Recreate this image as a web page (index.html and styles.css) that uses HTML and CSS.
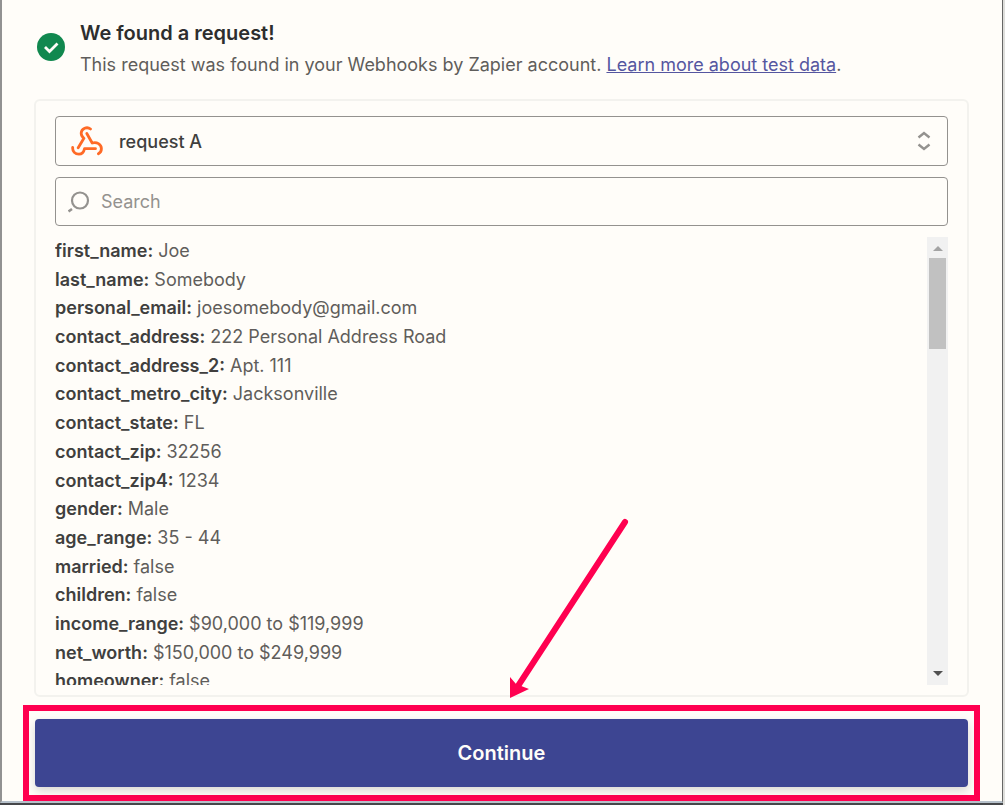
FILE: index.html
```
<!DOCTYPE html>
<html lang="en">
<head>
    <meta charset="UTF-8">
    <meta name="viewport" content="width=device-width, initial-scale=1.0">
    <title>Test trigger</title>
    <link rel="stylesheet" href="styles.css">
</head>
<body>
    <main class="panel">
        <header class="status">
            <svg class="status-icon" viewBox="0 0 28 28" aria-hidden="true">
                <circle cx="14" cy="14" r="14" fill="#11884f"/>
                <path d="M8 14l4.500 4.500L20.500 10.500" fill="none" stroke="#fffdf9" stroke-width="2.800"/>
            </svg>
            <div>
                <h1>We found a request!</h1>
                <p>This request was found in your Webhooks by Zapier account. <a href="#">Learn more about test data</a>.</p>
            </div>
        </header>

        <section class="card">
            <div class="field">
                <svg class="hook-icon" viewBox="0 0 32 30" aria-hidden="true">
                    <g fill="none" stroke="#ff6a26" stroke-width="2.800" stroke-linecap="round" stroke-linejoin="round">
                        <path d="M19.500 3C16 .2 10.500 2.500 10.200 7c-.1 2.200 1 4 2.700 5.300L7.200 21.800"/>
                        <path d="M15.800 7.500L21.200 17c4.500-1.500 9.200 1.200 9.200 5.700 0 2.200-1.200 4-3 5"/>
                        <path d="M1.700 21.500c-.4 4 2.500 6.700 6.200 6.700 2.700 0 4.800-1.700 5.600-5.500h11"/>
                    </g>
                </svg>
                <select class="request" aria-label="Request">
                    <option>request A</option>
                </select>
                <svg class="sort-icon" viewBox="0 0 14 20" aria-hidden="true">
                    <path d="M1.500 6.500L7 2l5.500 4.500M1.500 13.500L7 18l5.500-4.500" fill="none" stroke="#94928f" stroke-width="2.400"/>
                </svg>
            </div>

            <div class="field search">
                <svg class="search-icon" viewBox="0 0 22 22" aria-hidden="true">
                    <circle cx="12" cy="9.500" r="8" fill="none" stroke="#94928f" stroke-width="2.200"/>
                    <path d="M.5 20.500l3.500-2.500" stroke="#94928f" stroke-width="2.500"/>
                </svg>
                <input type="search" placeholder="Search" aria-label="Search">
            </div>

            <div class="results">
                <ul>
                    <li><b>first_name:</b> Joe</li>
                    <li><b>last_name:</b> Somebody</li>
                    <li><b>personal_email:</b> joesomebody@gmail.com</li>
                    <li><b>contact_address:</b> 222 Personal Address Road</li>
                    <li><b>contact_address_2:</b> Apt. 111</li>
                    <li><b>contact_metro_city:</b> Jacksonville</li>
                    <li><b>contact_state:</b> FL</li>
                    <li><b>contact_zip:</b> 32256</li>
                    <li><b>contact_zip4:</b> 1234</li>
                    <li><b>gender:</b> Male</li>
                    <li><b>age_range:</b> 35 - 44</li>
                    <li><b>married:</b> false</li>
                    <li><b>children:</b> false</li>
                    <li><b>income_range:</b> $90,000 to $119,999</li>
                    <li><b>net_worth:</b> $150,000 to $249,999</li>
                    <li><b>homeowner:</b> false</li>
                </ul>
                <div class="scrollbar" aria-hidden="true">
                    <svg viewBox="0 0 21 21"><path d="M6 14h10l-5-5z" fill="#a3a3a3"/></svg>
                    <div class="thumb"></div>
                    <svg viewBox="0 0 21 21"><path d="M6 7h10l-5 5z" fill="#505050"/></svg>
                </div>
            </div>
        </section>

        <div class="highlight">
            <svg class="arrow" viewBox="0 0 122 184" aria-hidden="true">
                <path d="M117 5L10 169" stroke="#ff0050" stroke-width="6" stroke-linecap="round"/>
                <path d="M2 181V160l6 7 13 5z" fill="#ff0050"/>
            </svg>
            <button type="button">Continue</button>
        </div>
    </main>
</body>
</html>
```

FILE: styles.css
```
* {
    box-sizing: border-box;
}

body {
    background-color: #454649;
    font-family: Inter, sans-serif;
    font-size: 18px;
    color: #5f5d5b;
    margin: 0;
    min-height: 100vh;
    border-right: 2px solid #dededb;
    overflow: hidden;
}

.panel {
    background-color: #fffdf9;
    padding: 18px 22px 0 21px;
    border-left: 2px solid #929292;
    border-right: 1px solid #666;
    border-bottom: 2px solid #b5c0ca;
}

.status {
    display: flex;
    align-items: flex-start;
    gap: 15px;
    margin: 0 14px 17px;
}

.status-icon {
    width: 28px;
    height: 28px;
    margin-top: 15px;
    flex: none;
}

h1 {
    margin: 0;
    font-size: 20px;
    font-weight: 600;
    line-height: 30px;
    color: #2d2e2e;
}

p {
    margin: 0;
    line-height: 34px;
}

a {
    color: #5556a0;
}

.card {
    display: flex;
    flex-direction: column;
    gap: 11px;
    margin: 0 11px;
    padding: 15px 19px 10px;
    border: 2px solid #f3f2ee;
    border-radius: 6px;
}

.field {
    display: flex;
    align-items: center;
    gap: 16px;
    height: 50px;
    padding: 0 16px 0 15px;
    border: 1px solid #94928f;
    border-radius: 4px;
}

.hook-icon {
    width: 32px;
    height: 30px;
}

.sort-icon {
    width: 14px;
    height: 20px;
}

.search-icon {
    width: 22px;
    height: 22px;
}

.search {
    gap: 11px;
    height: 49px;
    padding-left: 12px;
}

.request, input {
    flex: 1;
    min-width: 0;
    padding: 0;
    border: none;
    outline: none;
    appearance: none;
    background: none;
    font: inherit;
    color: #403f3e;
}

.request {
    font-weight: 500;
}

input::placeholder {
    color: #94928f;
}

.results {
    display: flex;
    justify-content: space-between;
    height: 448px;
    overflow: hidden;
}

/* rows share the list height, the last one is cut by the box */
ul {
    display: grid;
    grid-auto-rows: 1fr;
    height: 459px;
    margin: 0;
    padding: 0;
    list-style: none;
    line-height: 28px;
}

b {
    font-weight: 600;
    color: #403f3e;
}

.scrollbar {
    display: flex;
    flex-direction: column;
    width: 21px;
    background-color: #f1f1f1;
}

.scrollbar svg {
    width: 21px;
    height: 21px;
}

.scrollbar svg:last-child {
    margin-top: auto;
}

.thumb {
    height: 91px;
    margin: 0 2px;
    background-color: #c1c1c1;
}

.highlight {
    position: relative;
    margin-top: 8px;
    padding: 8px 6px;
    border: 6px solid #ff0050;
}

.arrow {
    position: absolute;
    left: 50%;
    bottom: 100%;
    width: 122px;
    height: 184px;
    margin: 0 0 10px 6px;
}

button {
    display: block;
    width: 100%;
    height: 68px;
    background-color: #3d4592;
    color: #fffdf9;
    border: none;
    border-radius: 4px;
    box-shadow: 0 4px 10px rgba(0, 0, 0, 0.15);
    font-family: inherit;
    font-size: 20px;
    font-weight: 600;
    cursor: pointer;
}
```
